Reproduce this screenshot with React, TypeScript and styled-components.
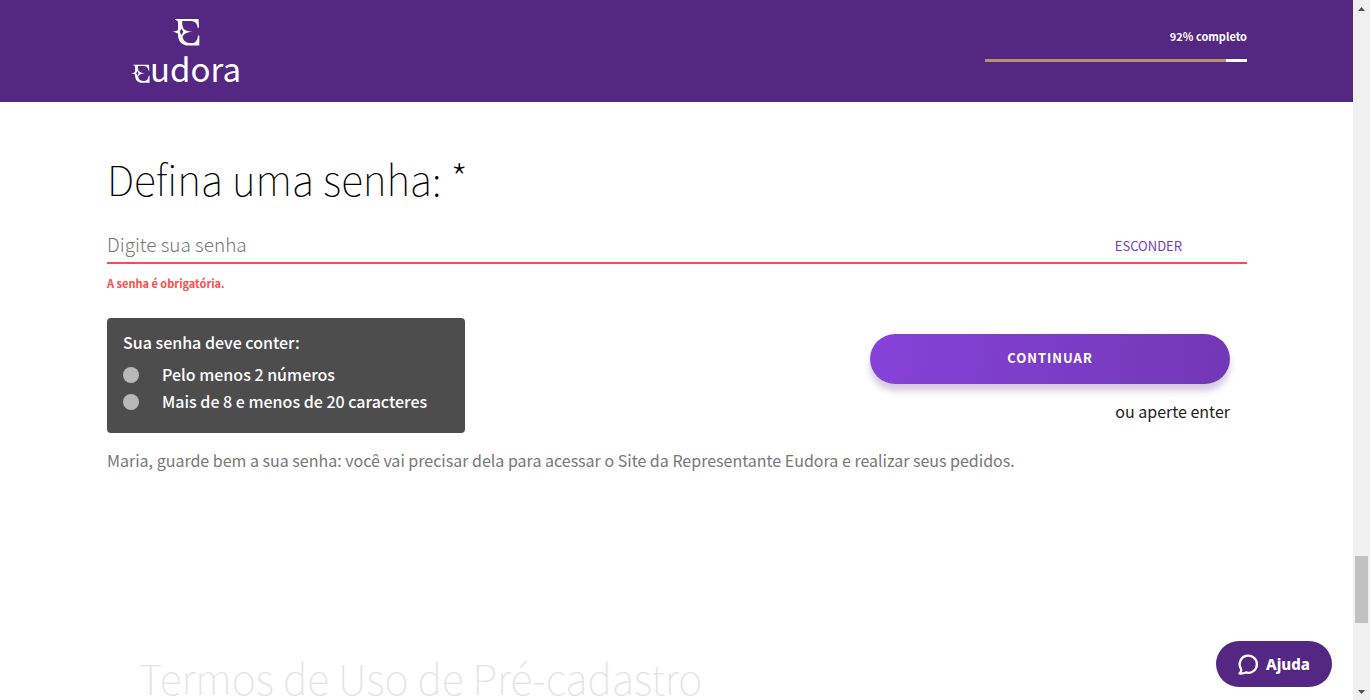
import React from 'react';
import styled, { createGlobalStyle } from 'styled-components';

const GlobalStyle = createGlobalStyle`
  *, *::before, *::after { box-sizing: border-box; }
  body {
    margin: 0;
    background: #fff;
    font-family: 'Noto Sans CJK JP', 'Noto Sans', sans-serif;
    color: #1d1d1d;
  }
  button, input { font-family: inherit; }
`;

const Viewport = styled.div`
  display: flex;
  height: 100vh;
  overflow: hidden;
`;

const Page = styled.div`
  flex: 1;
  min-width: 0;
  overflow: hidden;
`;

const Header = styled.header`
  background: #542782;
  padding: 18px 106px 16px 107px;
  display: flex;
  justify-content: space-between;
  align-items: flex-start;
`;

const Logo = styled.a`
  display: flex;
  flex-direction: column;
  align-items: center;
  gap: 4px;
  height: 68px;
  margin-left: 24px;
  color: #fff;
  text-decoration: none;
`;

const Wordmark = styled.span`
  display: flex;
  align-items: flex-end;
  font-size: 33px;
  line-height: 36px;

  svg { margin-bottom: 3px; }
`;

const Progress = styled.div`
  display: flex;
  flex-direction: column;
  align-items: flex-end;
  gap: 14px;
  width: 262px;
  padding-top: 10px;
`;

const ProgressLabel = styled.label`
  color: #fff;
  font-size: 11px;
  font-weight: 700;
  line-height: 17px;
`;

const ProgressBar = styled.progress`
  appearance: none;
  display: block;
  width: 100%;
  height: 3px;
  border: 0;
  background: #fff;
  &::-webkit-progress-bar { background: #fff; }
  &::-webkit-progress-value { background: #b79268; }
`;

const Form = styled.form`
  padding: 48px 106px 0 107px;
`;

const Title = styled.h1<{ $faded?: boolean }>`
  margin: 0;
  font-size: 41px;
  line-height: 56px;
  font-weight: 100;
  color: ${({ $faded }) => ($faded ? '#e3e3e3' : '#000')};
`;

const Field = styled.div`
  display: flex;
  align-items: center;
  margin-top: 20px;
  padding-right: 65px;
  height: 38px;
  border-bottom: 2px solid #fc4b4b;
`;

const PasswordInput = styled.input`
  flex: 1;
  min-width: 0;
  padding: 0;
  border: 0;
  outline: 0;
  background: transparent;
  font-size: 19px;
  font-weight: 300;
  line-height: 30px;
  &::placeholder { color: #777; opacity: 1; }
`;

const ToggleButton = styled.button`
  padding: 3px 0 0;
  border: 0;
  background: transparent;
  color: #763abf;
  font-size: 13px;
  line-height: 20px;
`;

const ErrorText = styled.p`
  margin: 9px 0 0;
  color: #fc4b4b;
  font-size: 11px;
  font-weight: 700;
  line-height: 20px;
`;

const Columns = styled.div`
  display: flex;
  justify-content: space-between;
  align-items: flex-start;
  margin-top: 25px;
`;

const Rules = styled.section`
  width: 358px;
  height: 115px;
  padding: 11px 16px;
  border-radius: 4px;
  background: #4d4d4d;
  color: #fff;
  font-size: 16px;
  font-weight: 500;
  line-height: 27px;
`;

const RulesTitle = styled.p`
  margin: 0 0 5px;
`;

const RuleList = styled.ul`
  margin: 0;
  padding: 0;
  list-style: none;
`;

const Rule = styled.li`
  display: flex;
  align-items: center;
  gap: 23px;
  &::before {
    content: '';
    width: 16px;
    height: 16px;
    border-radius: 50%;
    background: #b8b8b8;
  }
`;

const Actions = styled.div`
  display: flex;
  flex-direction: column;
  align-items: flex-end;
  gap: 15px;
  padding: 16px 17px 0 0;
`;

const SubmitButton = styled.button`
  width: 360px;
  height: 50px;
  padding: 0 0 3px;
  border: 0;
  border-radius: 25px;
  background: linear-gradient(100deg, #8642d8, #7138b6);
  box-shadow: 0 7px 6px rgba(84, 39, 130, 0.24);
  color: #fff;
  font-size: 13px;
  font-weight: 700;
  letter-spacing: 1px;
`;

const Hint = styled.p`
  margin: 0;
  font-size: 16px;
  line-height: 24px;
`;

const Note = styled.p`
  margin: 15px 0 0;
  color: #777;
  font-size: 16px;
  line-height: 24px;
`;

const Terms = styled.section`
  padding: 177px 139px 0;
`;

const HelpButton = styled.button`
  position: fixed;
  right: 38px;
  bottom: 13px;
  display: flex;
  align-items: center;
  justify-content: center;
  gap: 7px;
  width: 116px;
  height: 46px;
  border: 0;
  border-radius: 23px;
  background: #542782;
  color: #fff;
  font-family: 'Noto Sans', sans-serif;
  font-size: 15px;
  font-weight: 800;
`;

const ScrollTrack = styled.div`
  display: flex;
  flex-direction: column;
  align-items: center;
  width: 17px;
  background: #f1f1f1;
`;

const ScrollThumb = styled.div`
  width: 13px;
  height: 67px;
  margin: auto 0 60px;
  background: #c1c1c1;
`;

const Arrow = ({ down = false }: { down?: boolean }) => (
  <svg width="17" height="17" viewBox="0 0 17 17" aria-hidden="true">
    <path d={down ? 'M5 7h7l-3.5 4z' : 'M5 11h7l-3.500-4z'} fill="#505050" />
  </svg>
);

const Emblem = ({ width, height }: { width: number; height: number }) => (
  <svg width={width} height={height} viewBox="0 0 28 29" preserveAspectRatio="none" fill="#fff" aria-hidden="true">
    <path d="M3 1H26.500L27 10H25.700C25 5.500 23 3.200 18 3.200H10.200V9L9 20H10.700C11.500 24 14 26 19 26C23.500 26 25.500 23.500 26 18H27.300V28.500H17C9.500 28.500 6 24 6 17V4.500C6 3 5 2 3 2z" />
    <path d="M10.500 7C9 11.500 6 13.800 0 14.300C6 14.800 8 17.500 10 22C10.500 17.500 13 15 20.500 14.300C13 13.600 10.500 11.500 10.500 7z" />
    <path d="M9.500 10.800l1.800 3.500l-1.800 3.500l-1.800-3.500z" fill="#542782" />
  </svg>
);

export default function App() {
  return (
    <Viewport>
      <GlobalStyle />
      <Page>
        <Header>
          <Logo href="#" aria-label="Eudora">
            <Emblem width={28} height={29} />
            <Wordmark>
              <Emblem width={19} height={19} />
              udora
            </Wordmark>
          </Logo>
          <Progress>
            <ProgressLabel htmlFor="progress">92% completo</ProgressLabel>
            <ProgressBar id="progress" value={92} max={100} />
          </Progress>
        </Header>
        <Form onSubmit={(e) => e.preventDefault()}>
          <Title><label htmlFor="senha">Defina uma senha: *</label></Title>
          <Field>
            <PasswordInput id="senha" type="text" placeholder="Digite sua senha" aria-describedby="senha-erro" />
            <ToggleButton type="button">ESCONDER</ToggleButton>
          </Field>
          <ErrorText id="senha-erro">A senha é obrigatória.</ErrorText>
          <Columns>
            <Rules>
              <RulesTitle>Sua senha deve conter:</RulesTitle>
              <RuleList>
                <Rule>Pelo menos 2 números</Rule>
                <Rule>Mais de 8 e menos de 20 caracteres</Rule>
              </RuleList>
            </Rules>
            <Actions>
              <SubmitButton type="submit">CONTINUAR</SubmitButton>
              <Hint>ou aperte enter</Hint>
            </Actions>
          </Columns>
          <Note>
            Maria, guarde bem a sua senha: você vai precisar dela para acessar o Site da Representante Eudora e realizar seus pedidos.
          </Note>
        </Form>
        <Terms>
          <Title as="h2" $faded>Termos de Uso de Pré-cadastro</Title>
        </Terms>
      </Page>
      <ScrollTrack aria-hidden="true">
        <Arrow />
        <ScrollThumb />
        <Arrow down />
      </ScrollTrack>
      <HelpButton type="button">
        <svg width="21" height="21" viewBox="0 0 20 20" fill="none" stroke="#fff" strokeWidth="2.2" strokeLinejoin="round" aria-hidden="true">
          <path d="M1.500 18.500C3 17.500 3.300 16 2.800 14A8.200 8.200 0 1 1 7.500 17.600C5.500 18.500 3.500 18.800 1.500 18.500z" />
        </svg>
        Ajuda
      </HelpButton>
    </Viewport>
  );
}
